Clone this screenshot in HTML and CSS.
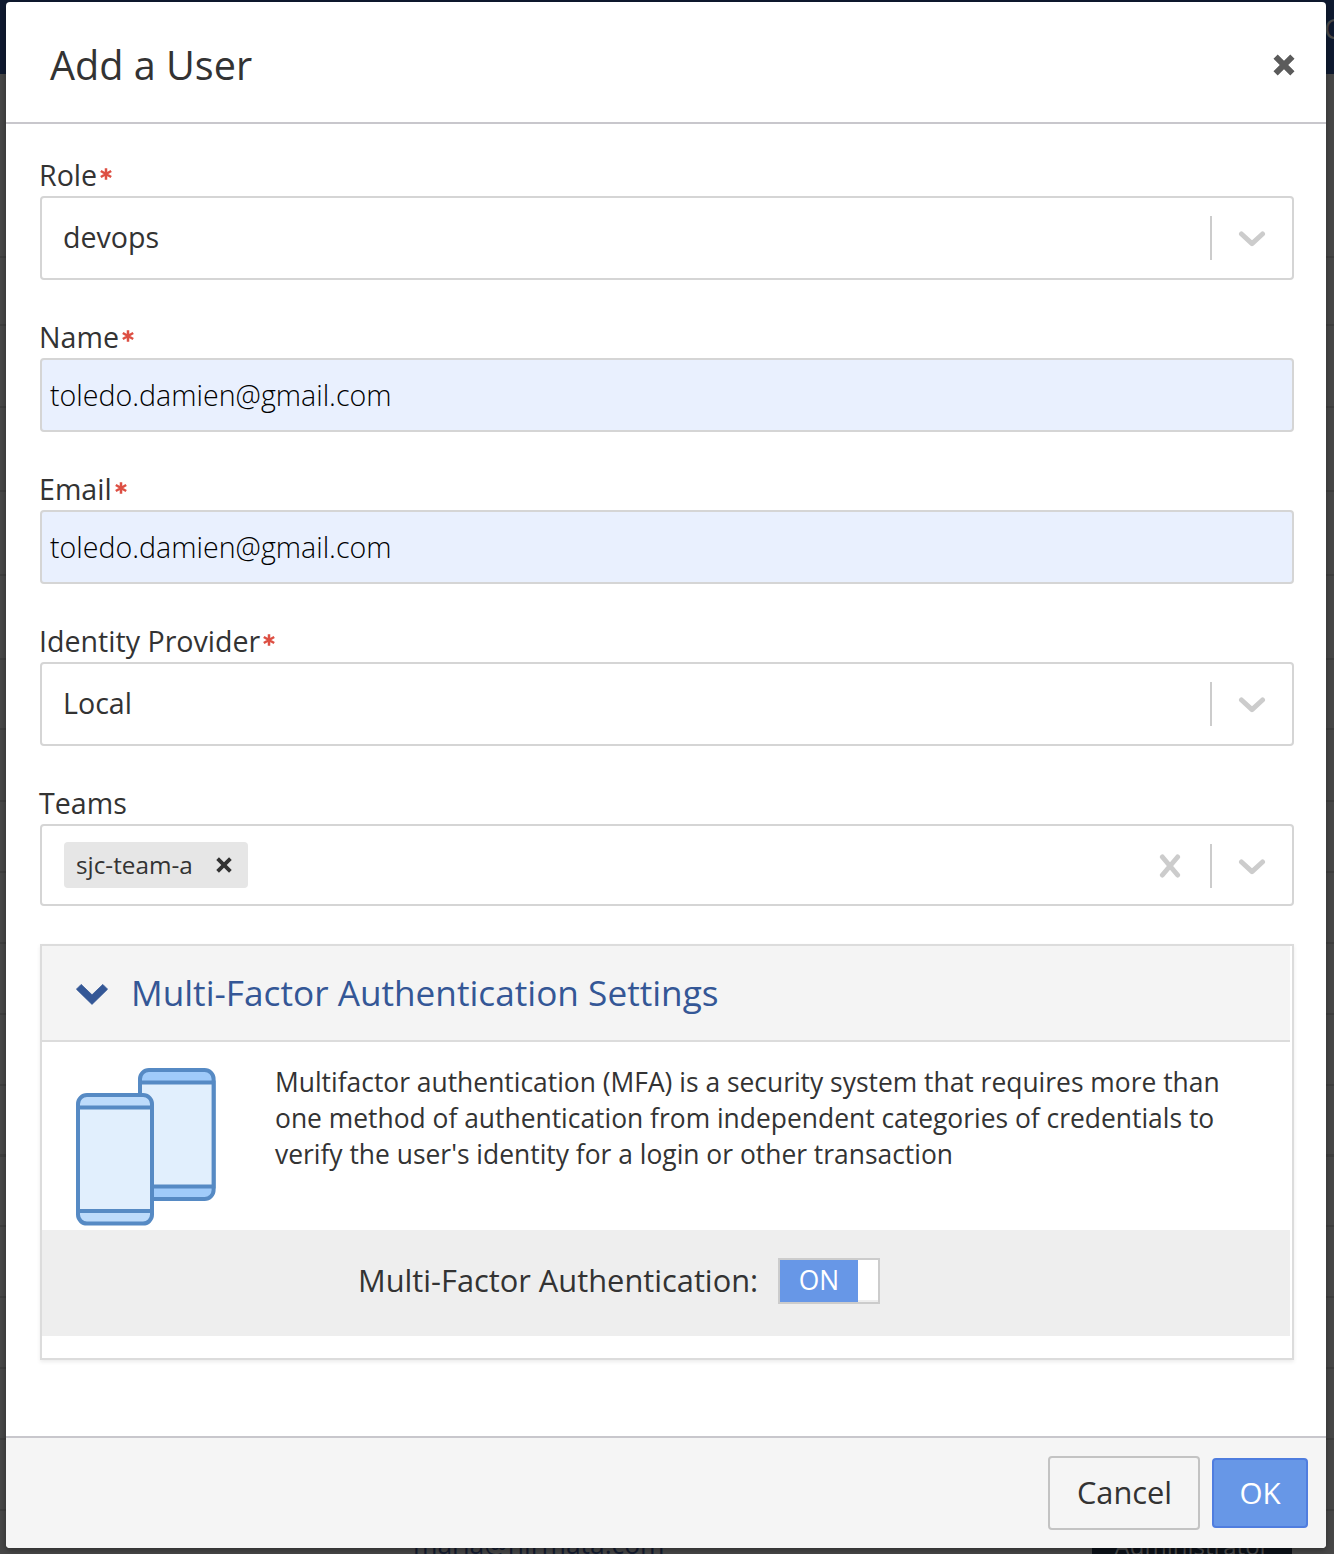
FILE: index.html
```html
<!DOCTYPE html>
<html lang="en">
<head>
<meta charset="utf-8">
<title>Add a User</title>
<link rel="stylesheet" href="styles.css">
</head>
<body>
<svg class="defs" width="0" height="0" aria-hidden="true">
  <symbol id="required" viewBox="0 0 12 12"><path d="M6 .2V11.8M.8 3L11.2 9M.8 9L11.2 3" fill="none" stroke="#dd4f43" stroke-width="2.5"/></symbol>
  <symbol id="arrow" viewBox="0 0 28 18"><path d="M3.5 4L14 13.6L24.5 4" fill="none" stroke="#ccc" stroke-width="5" stroke-linecap="round" stroke-linejoin="round"/></symbol>
</svg>
<div class="backdrop" aria-hidden="true">
  <div class="navbar"><span class="navbar-text">C</span></div>
  <div class="rule r1"></div><div class="rule r2"></div><div class="rule r3"></div><div class="rule r4"></div>
  <div class="rule r5"></div><div class="rule r6"></div><div class="rule r7"></div>
  <div class="rows"></div>
  <span class="row-email">maria@nirmata.com</span>
  <span class="row-role">Administrator</span>
</div>
<div class="modal" role="dialog">
  <header class="modal-header">
    <h1 class="title">Add a User</h1>
    <svg class="close" viewBox="0 0 22 22"><path d="M2.6 2.6L19.4 19.4M19.4 2.6L2.6 19.4" stroke="#5b5b5b" stroke-width="6"/></svg>
  </header>
  <main class="modal-body">
    <div class="field">
      <div class="label">Role<svg class="req"><use href="#required"/></svg></div>
      <div class="select"><span class="value">devops</span><span class="separator"></span><svg class="arrow"><use href="#arrow"/></svg></div>
    </div>
    <div class="field">
      <div class="label">Name<svg class="req"><use href="#required"/></svg></div>
      <div class="input">toledo.damien@gmail.com</div>
    </div>
    <div class="field">
      <div class="label">Email<svg class="req"><use href="#required"/></svg></div>
      <div class="input">toledo.damien@gmail.com</div>
    </div>
    <div class="field">
      <div class="label">Identity Provider<svg class="req"><use href="#required"/></svg></div>
      <div class="select"><span class="value">Local</span><span class="separator"></span><svg class="arrow"><use href="#arrow"/></svg></div>
    </div>
    <div class="field">
      <div class="label">Teams</div>
      <div class="select multi">
        <span class="chip"><span class="chip-text">sjc-team-a</span><svg class="chip-x" viewBox="0 0 16 16"><path d="M1.6 1.6L14.4 14.4M14.4 1.6L1.6 14.4" stroke="#333" stroke-width="3.8"/></svg></span>
        <svg class="clear" viewBox="0 0 22 24"><path d="M3.4 3L18.6 21M18.6 3L3.4 21" stroke="#ccc" stroke-width="5" stroke-linecap="round"/></svg>
        <span class="separator"></span><svg class="arrow"><use href="#arrow"/></svg>
      </div>
    </div>
    <section class="panel">
      <div class="panel-header">
        <svg class="chevron" viewBox="0 0 32 21"><path d="M5.2 .4L16 10.8L26.8 .4L31.6 5.2L16 20.4L.4 5.2Z" fill="#345796" stroke="#345796" stroke-width=".8" stroke-linejoin="round"/></svg>
        <h2 class="panel-title">Multi-Factor Authentication Settings</h2>
      </div>
      <div class="panel-info">
        <svg class="phones" viewBox="0 0 140 158">
          <g stroke="#568ac4" stroke-width="4">
            <rect x="64" y="2" width="73.6" height="129" rx="9" fill="#a0cbfa"/>
            <path d="M64 14.4H137.6V118.4H64Z" fill="#e1effd"/>
            <rect x="2" y="27" width="74" height="128.6" rx="9" fill="#bddbfb"/>
            <path d="M2 39.4H76V143H2Z" fill="#e1effd"/>
          </g>
        </svg>
        <p class="info-text">Multifactor authentication (MFA) is a security system that requires more than one method of authentication from independent categories of credentials to verify the user's identity for a login or other transaction</p>
      </div>
      <div class="panel-toggle">
        <span class="toggle-label">Multi-Factor Authentication:</span>
        <span class="toggle"><span class="toggle-on">ON</span><span class="toggle-handle"></span></span>
      </div>
    </section>
  </main>
  <footer class="modal-footer">
    <button class="btn cancel">Cancel</button>
    <button class="btn ok">OK</button>
  </footer>
</div>
</body>
</html>
```
FILE: styles.css
```css
* { box-sizing: border-box; }
html, body { margin: 0; height: 1554px; overflow: hidden; }
body {
  font-family: "Open Sans", sans-serif;
  font-size: 28.6px;
  color: #333;
  background: #474747;
}
svg { display: block; flex: none; }
.defs { position: absolute; }

/* dimmed page behind the dialog */
.backdrop { position: absolute; inset: 0; overflow: hidden; }
.navbar { height: 74px; background: #0f1a30; }
.navbar-text { position: absolute; left: 1324px; top: 9px; font-size: 28px; line-height: 38px; color: #4a4a4a; }
.rule { position: absolute; left: 0; right: 0; height: 2px; background: #3e3e3e; }
.r1 { top: 256px; }
.r2 { top: 324px; }
.r3 { top: 406px; }
.r4 { top: 490px; }
.r5 { top: 574px; }
.r6 { top: 658px; }
.r7 { top: 728px; }
.rows {
  position: absolute; left: 0; right: 0; top: 800px; bottom: 0;
  background: repeating-linear-gradient(#3e3e3e 0 2px, transparent 2px 70.9px);
}
.row-email { position: absolute; left: 413px; top: 1525px; font-size: 26.4px; line-height: 38px; color: #141c30; }
.row-role {
  position: absolute; left: 1092px; top: 1520px; width: 200px; height: 48px;
  text-align: center; font-size: 24px; line-height: 52px; color: #4a4a4a; background: #0c1118;
}

.modal {
  position: relative;
  display: flex; flex-direction: column;
  width: 1320px; height: 1546px;
  margin: 2px 0 0 6px;
  background: #fff;
  border-radius: 4px;
  box-shadow: 0 2px 6px rgba(0, 0, 0, .35);
  overflow: hidden;
}
.modal-header {
  display: flex; justify-content: space-between; align-items: center;
  height: 122px; padding: 0 31px 0 44px;
  border-bottom: 2px solid #c8c7cc;
}
.title { margin: 6px 0 0; font-size: 39.6px; font-weight: 400; line-height: 54px; }
.close { width: 22px; height: 22px; margin-top: 6px; }
.modal-body {
  display: flex; flex-direction: column; gap: 38px;
  flex: 1; padding: 32px 32px 0 34px;
}
.label { display: flex; height: 40px; margin-left: -1px; line-height: 38px; }
.req { width: 12px; height: 12px; margin: 12px 0 0 3px; }
.select {
  display: flex; align-items: center;
  height: 84px; padding: 0 26px 0 22px;
  border: 2px solid #d5d5d5; border-radius: 4px;
}
.value { flex: 1; margin-left: -1px; padding-bottom: 4px; }
.separator { width: 2px; height: 44px; background: #ccc; }
.arrow { width: 28px; height: 18px; margin: 2px 0 0 26px; }
.input {
  height: 74px; padding: 0 8px;
  border: 2px solid #d5d5d5; border-radius: 4px;
  background: #e9f0fe; color: #000;
  font-weight: 300; line-height: 70px;
}
.multi { height: 82px; }
.multi .separator { margin-top: 2px; }
.multi .arrow { margin-top: 4px; }
.chip {
  display: flex; align-items: center;
  width: 184px; height: 46px; padding: 0 16px 0 12px; margin-right: auto;
  background: #e6e6e6; border-radius: 4px;
  font-size: 24.3px;
}
.chip-text { flex: 1; padding-bottom: 1px; }
.chip-x { width: 16px; height: 16px; }
.clear { width: 22px; height: 24px; margin: 2px 29px 0 0; }

.panel {
  height: 416px; padding-right: 2px;
  border: 2px solid #dcdcdc;
  box-shadow: 0 2px 4px rgba(0, 0, 0, .08);
}
.panel-header {
  display: flex; align-items: center; gap: 23px;
  height: 96px; padding-left: 34px;
  background: #f4f4f4; border-bottom: 2px solid #dcdcdc;
  color: #345796;
}
.chevron { width: 32px; height: 21px; margin-top: 2px; }
.panel-title { margin: 0; padding-bottom: 2px; font-size: 35.2px; font-weight: 400; line-height: 48px; }
.panel-info { display: flex; height: 188px; padding: 22px 60px 0 34px; }
.phones { width: 140px; height: 158px; margin-top: 4px; }
.info-text { margin: 0 0 0 59px; font-size: 26.42px; line-height: 36px; }
.panel-toggle {
  display: flex; align-items: center;
  height: 106px; padding: 0 0 4px 316px;
  background: #eee;
}
.toggle-label { width: 420px; font-size: 30.8px; line-height: 42px; padding-bottom: 2px; white-space: nowrap; }
.toggle { display: flex; width: 102px; height: 46px; border: 2px solid #ccc; }
.toggle-on { width: 78px; background: #6797e7; color: #fff; font-size: 26.4px; line-height: 40px; text-align: center; }
.toggle-handle { flex: 1; background: #fff; border-bottom: 2px solid #eee; }

.modal-footer {
  display: flex; justify-content: flex-end; align-items: center; gap: 12px;
  height: 112px; padding-right: 18px;
  background: #f5f5f5; border-top: 2px solid #c8c7cc;
}
.btn { border-radius: 4px; font-family: inherit; font-size: 30.8px; line-height: 42px; color: #333; }
.cancel { width: 152px; height: 74px; padding: 0 0 2px 1px; background: #f5f5f5; border: 2px solid #c3c3c3; }
.ok { width: 96px; height: 70px; padding: 0; background: #6797e7; border: 2px solid #4f7ddf; color: #fff; font-size: 29.6px; }
```
